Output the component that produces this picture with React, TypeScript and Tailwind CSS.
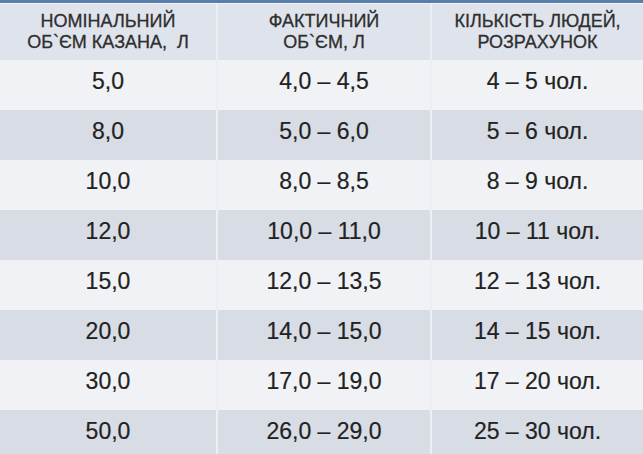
const rows: [string, string, string][] = [
  ["5,0", "4,0 – 4,5", "4 – 5 чол."],
  ["8,0", "5,0 – 6,0", "5 – 6 чол."],
  ["10,0", "8,0 – 8,5", "8 – 9 чол."],
  ["12,0", "10,0 – 11,0", "10 – 11 чол."],
  ["15,0", "12,0 – 13,5", "12 – 13 чол."],
  ["20,0", "14,0 – 15,0", "14 – 15 чол."],
  ["30,0", "17,0 – 19,0", "17 – 20 чол."],
  ["50,0", "26,0 – 29,0", "25 – 30 чол."],
];

const headers = [
  ["НОМІНАЛЬНИЙ", "ОБ`ЄМ КАЗАНА,  Л"],
  ["ФАКТИЧНИЙ", "ОБ`ЄМ, Л"],
  ["КІЛЬКІСТЬ ЛЮДЕЙ,", "РОЗРАХУНОК"],
];

export default function App() {
  return (
    <div
      className="w-[643px] h-[454px] overflow-hidden bg-[#eef0f4]"
      style={{ fontFamily: '"Liberation Sans", Arial, sans-serif' }}
    >
      <div className="h-[3px] bg-[#5a7eab]" />
      <div className="h-[1px] bg-[#f4f6f9]" />
      <div className="grid grid-cols-[216px_214px_1fr] h-[56px] bg-[#dfe3eb]">
        {headers.map((h, i) => (
          <div
            key={i}
            className={`flex flex-col items-center justify-center text-[18px] leading-[21px] text-[#2e2e2e] [-webkit-text-stroke:0.3px_#2e2e2e] ${
              i > 0 ? "border-l-2 border-[#eceef3]" : ""
            }`}
          >
            <span className="whitespace-pre">{h[0]}</span>
            <span className="whitespace-pre">{h[1]}</span>
          </div>
        ))}
      </div>
      {rows.map((r, i) => (
        <div
          key={i}
          className={`grid grid-cols-[216px_214px_1fr] h-[50px] ${
            i % 2 === 0 ? "bg-[#f0f2f5]" : "bg-[#d7dce5]"
          }`}
        >
          {r.map((c, j) => (
            <div
              key={j}
              className={`flex items-center justify-center pb-[8px] text-[23px] text-[#222] [-webkit-text-stroke:0.2px_#222] ${
                j > 0 ? "border-l-2 border-[#eceef3]" : ""
              }`}
            >
              {c}
            </div>
          ))}
        </div>
      ))}
    </div>
  );
}
